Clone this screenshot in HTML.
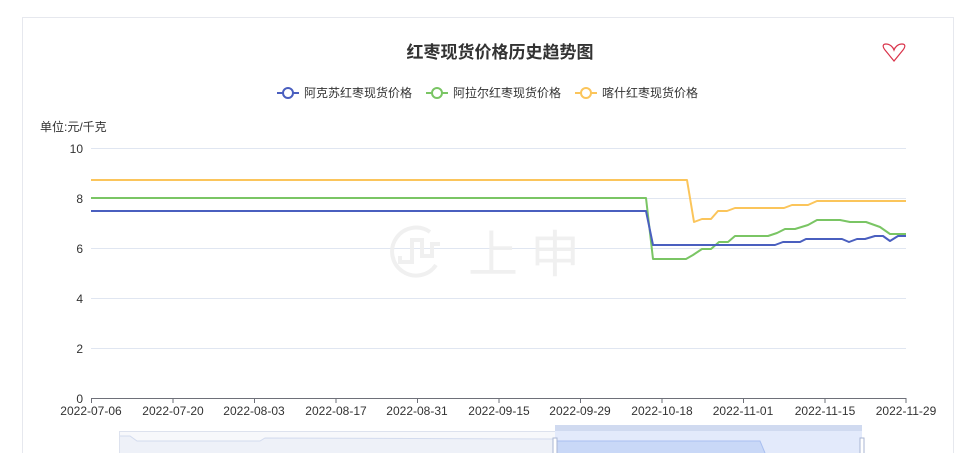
<!DOCTYPE html>
<html><head><meta charset="utf-8"><style>
body{margin:0;background:#fff;width:980px;height:453px;overflow:hidden;font-family:"Liberation Sans","Noto Sans CJK SC",sans-serif;}
</style></head><body>
<svg width="980" height="453" xmlns="http://www.w3.org/2000/svg" font-family="Liberation Sans, Noto Sans CJK SC, sans-serif">
<rect x="22.5" y="17.5" width="931" height="450" fill="#fff" stroke="#e6e8ee"/>
<text x="500" y="58" text-anchor="middle" font-size="17" font-weight="bold" fill="#333">红枣现货价格历史趋势图</text>
<path d="M894 61 L885 50 C882 46 883 44 886 44 C890 44 893 47 894 50 C895 47 898 44 902 44 C905 44 906 46 903 50 Z" fill="none" stroke="#d9334a" stroke-width="1.2"/>
<g font-size="12" fill="#333">
<line x1="277" y1="93" x2="299" y2="93" stroke="#4a5fbf" stroke-width="2"/><circle cx="288" cy="93" r="5" fill="#fff" stroke="#4a5fbf" stroke-width="2"/><text x="304" y="97">阿克苏红枣现货价格</text>
<line x1="426" y1="93" x2="448" y2="93" stroke="#7ac564" stroke-width="2"/><circle cx="437" cy="93" r="5" fill="#fff" stroke="#7ac564" stroke-width="2"/><text x="453" y="97">阿拉尔红枣现货价格</text>
<line x1="575" y1="93" x2="597" y2="93" stroke="#fbc55b" stroke-width="2"/><circle cx="586" cy="93" r="5" fill="#fff" stroke="#fbc55b" stroke-width="2"/><text x="602" y="97">喀什红枣现货价格</text>
<text x="40" y="131">单位:元/千克</text>
</g>
<g stroke="#e0e6f1" stroke-width="1">
<line x1="91" y1="148.5" x2="906" y2="148.5"/><line x1="91" y1="198.5" x2="906" y2="198.5"/><line x1="91" y1="248.5" x2="906" y2="248.5"/><line x1="91" y1="298.5" x2="906" y2="298.5"/><line x1="91" y1="348.5" x2="906" y2="348.5"/>
</g>
<g opacity="0.9">
<path d="M430 232 A24 24 0 1 0 436 265" fill="none" stroke="#efefef" stroke-width="4"/>
<path d="M400 256 L400 262 L412 262 L412 240 L422 240 L422 256 L432 256 L432 244 L440 244" fill="none" stroke="#efefef" stroke-width="4"/>
<text x="468" y="272" font-size="50" fill="#efefef">上</text>
<text x="530" y="272" font-size="50" fill="#efefef">申</text>
</g>
<line x1="91" y1="398.5" x2="906" y2="398.5" stroke="#6e7079"/>
<g stroke="#6e7079">
<line x1="91.5" y1="398" x2="91.5" y2="403"/><line x1="173" y1="398" x2="173" y2="403"/><line x1="254.5" y1="398" x2="254.5" y2="403"/><line x1="336" y1="398" x2="336" y2="403"/><line x1="417.5" y1="398" x2="417.5" y2="403"/><line x1="499" y1="398" x2="499" y2="403"/><line x1="580.5" y1="398" x2="580.5" y2="403"/><line x1="662" y1="398" x2="662" y2="403"/><line x1="743.5" y1="398" x2="743.5" y2="403"/><line x1="825" y1="398" x2="825" y2="403"/><line x1="906" y1="398" x2="906" y2="403"/>
</g>
<g font-size="12" fill="#333" text-anchor="end">
<text x="83" y="153">10</text><text x="83" y="203">8</text><text x="83" y="253">6</text><text x="83" y="303">4</text><text x="83" y="353">2</text><text x="83" y="403">0</text>
</g>
<g font-size="12" fill="#333" text-anchor="middle">
<text x="91" y="415">2022-07-06</text><text x="173" y="415">2022-07-20</text><text x="254" y="415">2022-08-03</text><text x="336" y="415">2022-08-17</text><text x="417" y="415">2022-08-31</text><text x="499" y="415">2022-09-15</text><text x="580" y="415">2022-09-29</text><text x="662" y="415">2022-10-18</text><text x="743" y="415">2022-11-01</text><text x="825" y="415">2022-11-15</text><text x="906" y="415">2022-11-29</text>
</g>
<g fill="none" stroke-width="2" stroke-linejoin="round">
<polyline stroke="#fbc55b" points="91,180 687,180 694,222 702,219 711,219 718,211 727,211 735,208 784,208 792,205 808,205 817,201 906,201"/>
<polyline stroke="#7ac564" points="91,198 646,198 653,259 686,259 693,255 702,249 711,249 719,242 728,242 735,236 768,236 777,233 785,229 795,229 808,225 817,220 840,220 850,222 866,222 880,227 890,234 906,234"/>
<polyline stroke="#4a5fbf" points="91,211 646,211 653,245 775,245 783,242 800,242 806,239 842,239 849,242 857,239 865,239 875,236 883,236 890,241 898,236 906,236"/>
</g>
<rect x="119.5" y="431.5" width="742" height="30" fill="#f7f8fb" stroke="#dde2ee"/>
<polygon points="120,436 130,436 137,441 260,441 265,438 555,439 555,453 120,453" fill="#eef1f8" stroke="none"/>
<polyline points="120,436 130,436 137,441 260,441 265,438 555,439" fill="none" stroke="#d3dbee"/>
<rect x="555" y="425" width="307" height="7" fill="#d0daf0"/>
<rect x="555" y="431" width="307" height="30" fill="#e3eafb"/>
<polygon points="557,441 760,441 765,453 557,453" fill="#c9d8f7"/>
<polyline points="557,441 760,441 765,453" fill="none" stroke="#a9bff0"/>
<rect x="553" y="438" width="4" height="16" fill="#fff" stroke="#aab6d3"/>
<rect x="860" y="438" width="4" height="16" fill="#fff" stroke="#aab6d3"/>
</svg>
</body></html>
